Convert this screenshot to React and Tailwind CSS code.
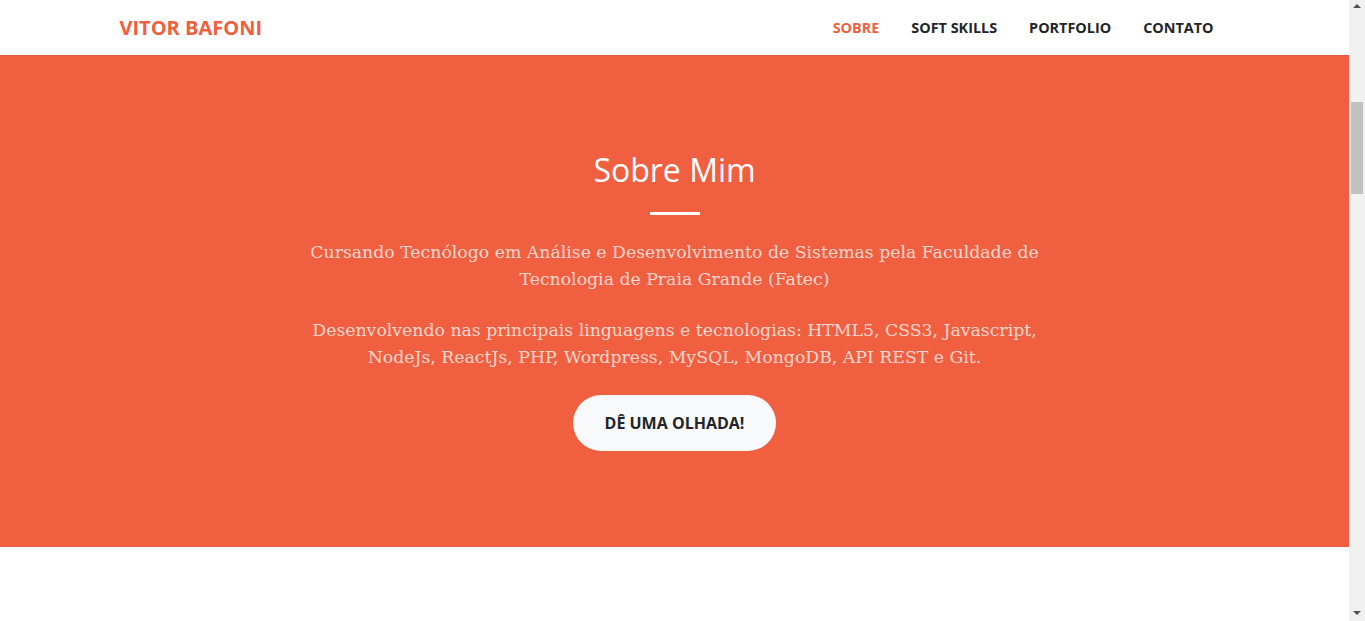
const NAV_ITENS = [
  { label: 'Sobre', ativo: true },
  { label: 'Soft Skills' },
  { label: 'Portfolio' },
  { label: 'Contato' },
];

function BarraRolagem() {
  // barra de rolagem da janela (página rolada até a seção "Sobre")
  return (
    <div className="relative h-full w-4 shrink-0 bg-[#f1f1f1]">
      <span className="absolute top-[4px] left-[4px] h-0 w-0 border-x-[4px] border-b-[4px] border-x-transparent border-b-[#505050]" />
      <div className="absolute top-[102px] left-[2px] h-[92px] w-[12px] bg-[#c1c1c1]" />
      <span className="absolute bottom-[6px] left-[4px] h-0 w-0 border-x-[4px] border-t-[4px] border-x-transparent border-t-[#505050]" />
    </div>
  );
}

export default function App() {
  return (
    <div className="flex h-[621px] overflow-hidden bg-white font-['Open_Sans',sans-serif] text-[#212529]">
      <main className="h-full min-w-0 flex-1 overflow-hidden">
        <nav className="relative z-10 h-[55px] bg-white shadow-[0_1px_1px_rgba(0,0,0,0.04)]">
          <div className="mx-auto flex h-full max-w-[1140px] items-center justify-between px-[15px]">
            <a href="#" className="text-[20px] font-bold uppercase text-[#f05f40]">
              Vitor Bafoni
            </a>
            <ul className="flex items-center">
              {NAV_ITENS.map((item) => (
                <li key={item.label}>
                  <a
                    href="#"
                    className={`block px-4 text-[14.4px] font-bold uppercase ${
                      item.ativo ? 'text-[#f05f40]' : 'text-[#212529]'
                    }`}
                  >
                    {item.label}
                  </a>
                </li>
              ))}
            </ul>
          </div>
        </nav>

        <section className="bg-[#f05f40] pt-24 pb-24 shadow-[0_2px_3px_rgba(0,0,0,0.05)]">
          <div className="mx-auto flex max-w-[730px] flex-col items-center text-center">
            <h2 className="text-[32px] font-normal leading-[1.2] text-white">Sobre Mim</h2>
            <hr className="mt-[23px] mb-6 w-[50px] border-t-[3px] border-white" />
            <p className="mb-6 font-['DejaVu_Serif',serif] text-[17.3px] leading-[27px] text-white/75">
              Cursando Tecnólogo em Análise e Desenvolvimento de Sistemas pela Faculdade de Tecnologia de
              Praia Grande (Fatec)
            </p>
            <p className="mb-6 font-['DejaVu_Serif',serif] text-[17.3px] leading-[27px] text-white/75">
              Desenvolvendo nas principais linguagens e tecnologias: HTML5, CSS3, Javascript, NodeJs,
              ReactJs, PHP, Wordpress, MySQL, MongoDB, API REST e Git.
            </p>
            <a
              href="#"
              className="rounded-full bg-[#f8f9fa] px-8 py-4 text-base font-bold uppercase leading-6 text-[#212529]"
            >
              Dê uma olhada!
            </a>
          </div>
        </section>

        <section className="h-[200px] bg-white" />
      </main>
      <BarraRolagem />
    </div>
  );
}
